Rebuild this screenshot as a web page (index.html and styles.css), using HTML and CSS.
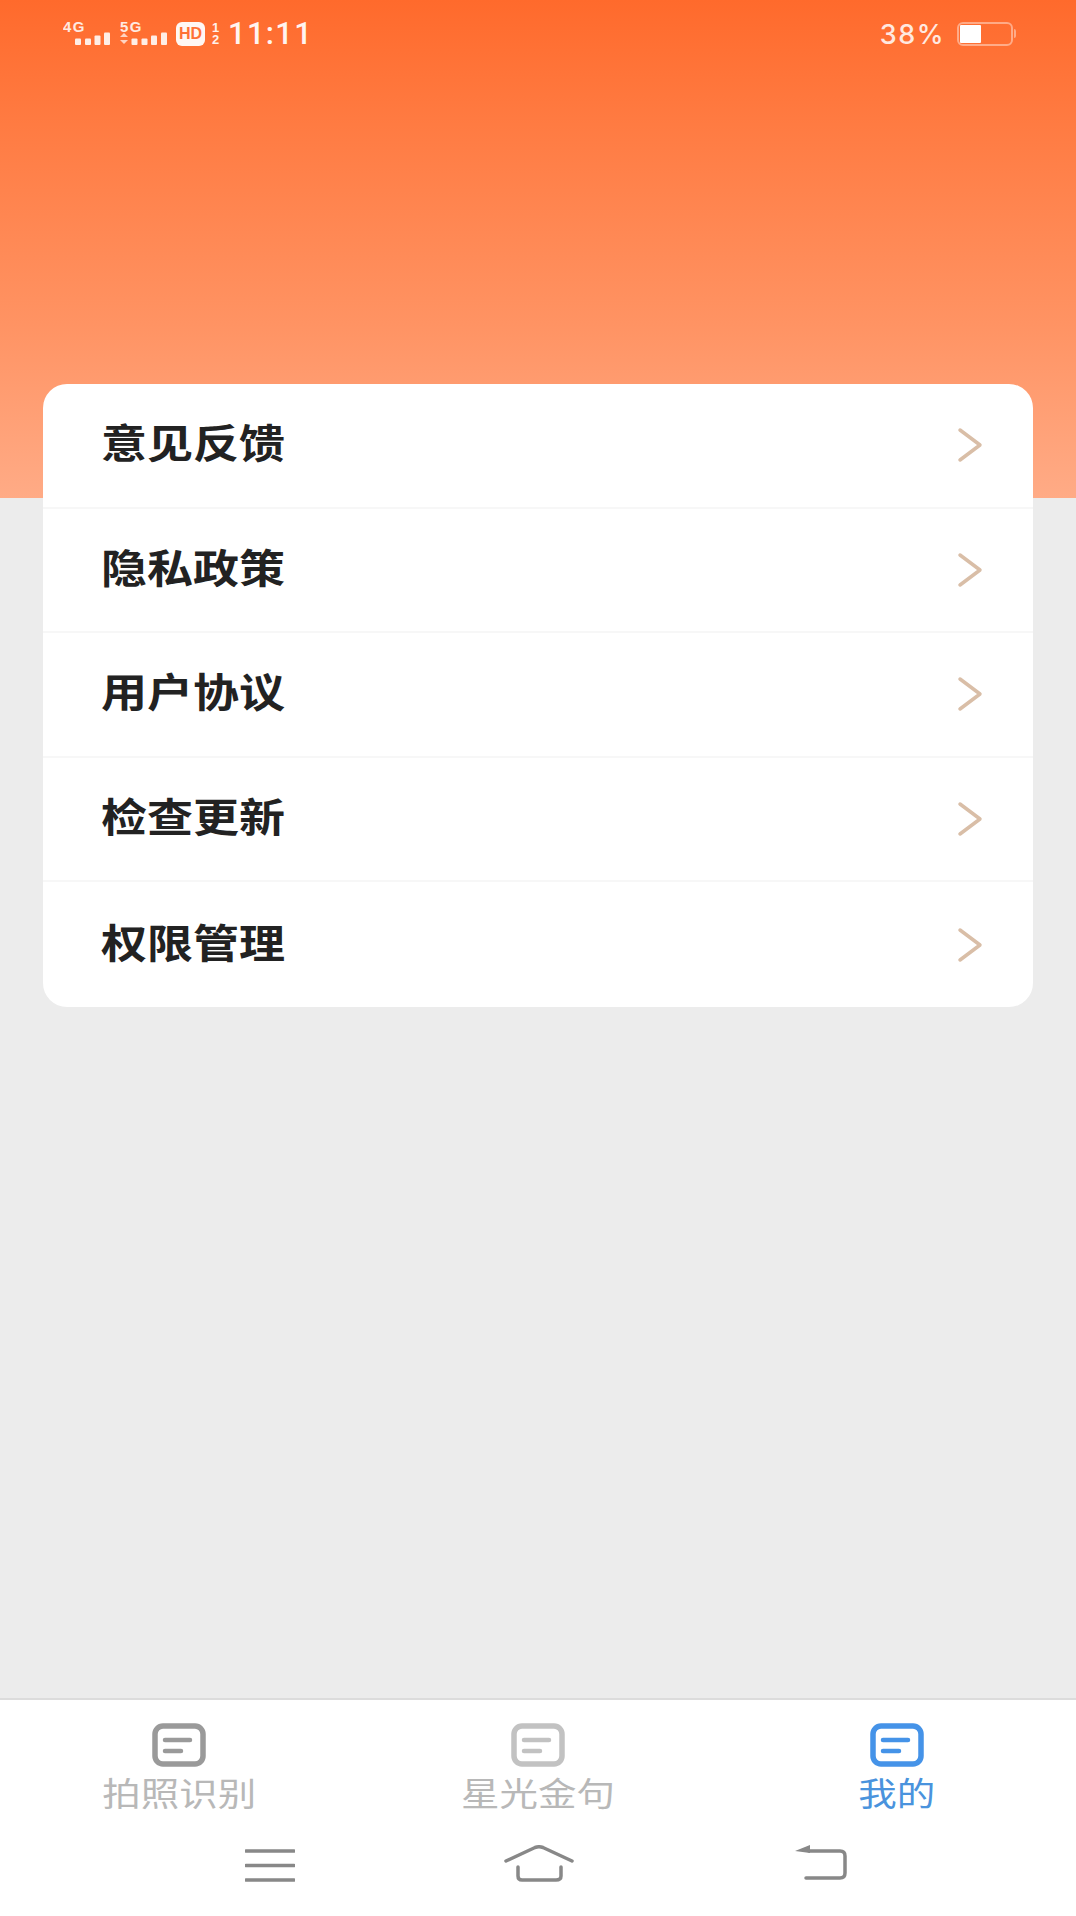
FILE: index.html
```html
<!DOCTYPE html>
<html lang="zh-CN">
<head>
<meta charset="utf-8">
<title>我的</title>
<link rel="stylesheet" href="styles.css">
</head>
<body>
<div class="app">
  <header class="hero">
    <div class="status">
      <div class="status-left">
        <div class="sig sig-4g">
          <span class="sig-label">4G</span>
          <svg class="sig-bars" width="35" height="13" viewBox="0 0 35 13"><g fill="#fff" fill-opacity=".88"><rect x="0" y="6.500" width="6" height="6.500" rx="1"/><rect x="10" y="6.500" width="6" height="6.500" rx="1"/><rect x="19.500" y="3.500" width="6" height="9.500" rx="1"/><rect x="29" y="0.500" width="6" height="12.500" rx="1"/></g></svg>
        </div>
        <div class="sig sig-5g">
          <span class="sig-label">5G</span>
          <svg class="sig-bars" width="47" height="13" viewBox="0 0 47 13"><g fill="#fff" fill-opacity=".88"><path d="M4 1 8 5H0zM4 12 0 8h8z" fill-opacity=".7"/><rect x="11.500" y="6.500" width="6" height="6.500" rx="1"/><rect x="21.500" y="6.500" width="6" height="6.500" rx="1"/><rect x="31" y="3.500" width="6" height="9.500" rx="1"/><rect x="41" y="0.500" width="6" height="12.500" rx="1"/></g></svg>
        </div>
        <span class="hd">HD</span>
        <span class="sim"><span>1</span><span>2</span></span>
        <span class="clock">11:11</span>
      </div>
      <div class="status-right">
        <span class="pct">38%</span>
        <span class="battery"><span class="battery-fill"></span></span>
        <span class="battery-nub"></span>
      </div>
    </div>
  </header>

  <main class="content">
    <ul class="card">
      <li class="row"><span class="row-text">意见反馈</span><svg class="chev" width="26" height="36" viewBox="0 0 26 36"><path d="M3 3 23 18 3 33"/></svg></li>
      <li class="row"><span class="row-text">隐私政策</span><svg class="chev" width="26" height="36" viewBox="0 0 26 36"><path d="M3 3 23 18 3 33"/></svg></li>
      <li class="row"><span class="row-text">用户协议</span><svg class="chev" width="26" height="36" viewBox="0 0 26 36"><path d="M3 3 23 18 3 33"/></svg></li>
      <li class="row"><span class="row-text">检查更新</span><svg class="chev" width="26" height="36" viewBox="0 0 26 36"><path d="M3 3 23 18 3 33"/></svg></li>
      <li class="row"><span class="row-text">权限管理</span><svg class="chev" width="26" height="36" viewBox="0 0 26 36"><path d="M3 3 23 18 3 33"/></svg></li>
    </ul>
  </main>

  <footer class="bottom">
    <nav class="tabs">
      <a class="tab tab-dark"><svg class="tab-icon" width="54" height="44" viewBox="0 0 54 44"><rect x="3" y="3" width="48" height="38" rx="8"/><path d="M13 17H38M13 28H29"/></svg><span class="tab-label">拍照识别</span></a>
      <a class="tab tab-light"><svg class="tab-icon" width="54" height="44" viewBox="0 0 54 44"><rect x="3" y="3" width="48" height="38" rx="8"/><path d="M13 17H38M13 28H29"/></svg><span class="tab-label">星光金句</span></a>
      <a class="tab tab-active"><svg class="tab-icon" width="54" height="44" viewBox="0 0 54 44"><rect x="3" y="3" width="48" height="38" rx="8"/><path d="M13 17H38M13 28H29"/></svg><span class="tab-label">我的</span></a>
    </nav>
    <div class="sysnav">
      <svg class="sys sys-menu" width="50" height="34" viewBox="0 0 50 34"><path d="M1 3H49M1 17.500H49M1 32H49"/></svg>
      <svg class="sys sys-home" width="70" height="38" viewBox="0 0 70 38"><path d="M2 16 31 2.500Q35 1 39 2.500L68 16"/><path d="M14 22V31Q14 35 18 35H52Q57 35 57 31V22"/></svg>
      <svg class="sys sys-back" width="52" height="36" viewBox="0 0 52 36"><path class="fill" d="M0 6 15 0V8z"/><path d="M14 6H45Q50 6 50 11V28Q50 33 45 33H11"/></svg>
    </div>
  </footer>
</div>
</body>
</html>
```
FILE: styles.css
```css
* { box-sizing: border-box; }
html, body { margin: 0; padding: 0; }
body { background: #ececec; font-family: "Noto Sans CJK SC", "Noto Sans", sans-serif; }
.app { width: 1076px; height: 1916px; display: flex; flex-direction: column; overflow: hidden; background: #ececec; }

.hero { height: 498px; flex: none; background: linear-gradient(180deg, #ff6a2c 0%, #ff7b42 25%, #ff9363 65%, #ffab86 100%); }
.status { display: flex; justify-content: space-between; padding: 21px 60px 0 63px; color: #fff; }
.status-left { display: flex; align-items: flex-start; }
.status-right { display: flex; align-items: flex-start; }
.sig { display: flex; flex-direction: column; width: 57px; }
.sig-label { font: 700 15px/11px "Liberation Sans", sans-serif; letter-spacing: 1.500px; color: #fff; opacity: .85; }
.sig-bars { display: block; margin-top: 0; }
.sig-4g .sig-bars { margin-left: 12px; }
.hd { width: 29px; height: 24px; margin: 1px 0 0 -1px; background: #fff; border-radius: 6px; opacity: .95; color: #ff7238; font: 700 16px/24px "Liberation Sans", sans-serif; text-align: center; }
.sim { display: flex; flex-direction: column; width: 9px; margin: 1px 0 0 6px; font: 700 13px/12px "Liberation Sans", sans-serif; text-align: center; color: #fff; opacity: .9; }
.clock { margin: 1px 0 0 8px; font: 500 31px/24px Roboto, sans-serif; letter-spacing: 1.300px; color: #fff; opacity: .93; }
.pct { font: 500 27px/24px Inter, sans-serif; letter-spacing: 1.500px; margin-top: 2px; opacity: .85; }
.battery { width: 56px; height: 24px; margin: 1px 0 0 12px; padding: 1px; border: 2px solid rgba(255,255,255,.42); border-radius: 6px; }
.battery-fill { display: block; width: 21px; height: 100%; background: #fff; border-radius: 1px; }
.battery-nub { width: 2px; height: 9px; margin: 8px 0 0 1px; background: rgba(255,255,255,.42); border-radius: 0 2px 2px 0; }

.content { flex: 1; margin-top: -114px; padding: 0 43px; }
.card { list-style: none; margin: 0; padding: 0; background: #fff; border-radius: 24px; overflow: hidden; }
.row { height: 124.600px; display: flex; align-items: center; justify-content: space-between; padding: 0 50px 0 58px; border-bottom: 2px solid #f7f7f7; }
.row:last-child { border-bottom: 0; }
.row-text { display: inline-block; font-size: 46px; line-height: 60px; font-weight: 700; color: #222; margin-bottom: 8px; transform: scaleY(.86); }
.chev { flex: none; }
.chev path { fill: none; stroke: #d9bea7; stroke-width: 3.500; stroke-linecap: round; stroke-linejoin: round; }

.bottom { height: 218px; flex: none; background: #fff; border-top: 2px solid #dcdcdc; }
.tabs { display: grid; grid-template-columns: repeat(3, 1fr); padding-top: 23px; }
.tab { display: flex; flex-direction: column; align-items: center; color: #b8b8b8; font-size: 38.500px; line-height: 46px; }
.tab-label { display: block; transform: scaleY(.86); }
.tab-icon { display: block; margin-bottom: 1px; fill: none; stroke-width: 5.500; stroke-linecap: round; }
.tab-icon path { stroke-width: 4.500; }
.tab-dark .tab-icon { stroke: #9a9a9a; }
.tab-light .tab-icon { stroke: #c2c2c2; }
.tab-active { color: #4a93dd; }
.tab-active .tab-icon { stroke: #4593e8; }

.sysnav { display: flex; align-items: flex-start; padding: 34px 0 0 245px; }
.sys { display: block; fill: none; stroke: #888; stroke-width: 3.500; stroke-linecap: round; }
.sys .fill { fill: #888; stroke: none; }
.sys-home { margin: -3px 0 0 209px; }
.sys-back { margin: -3px 0 0 221px; }
```
